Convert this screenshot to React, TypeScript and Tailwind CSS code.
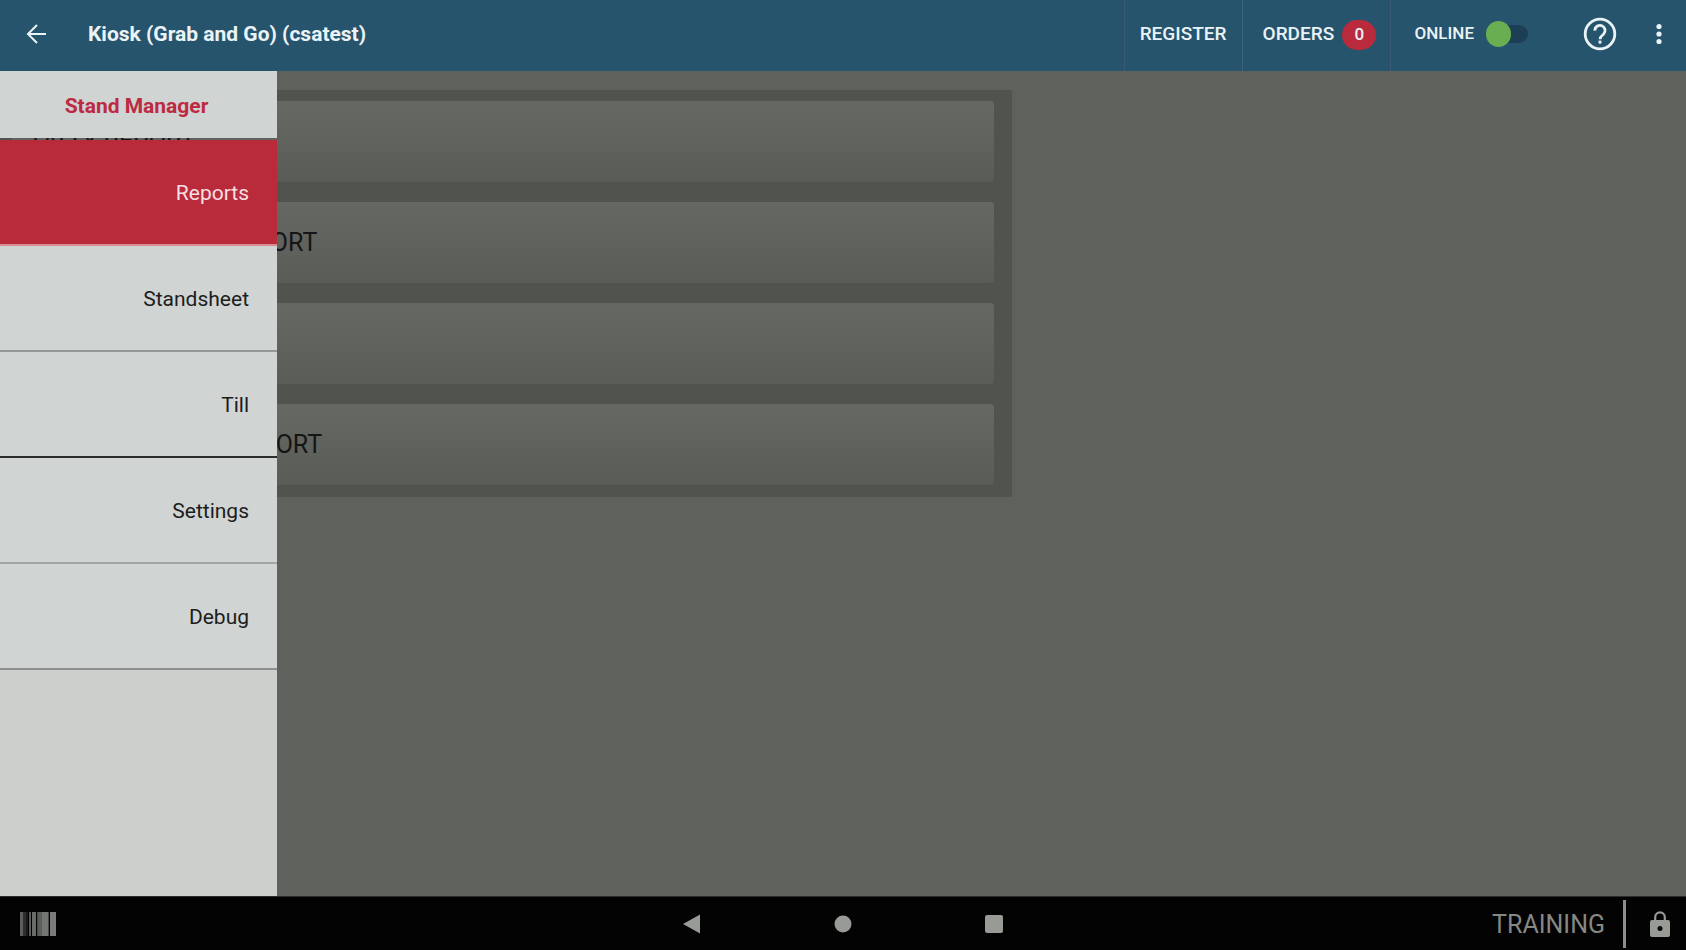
import { useState } from 'react';

const MENU_ITEMS = [
  { label: 'Reports', border: 'border-[#d98a93]' },
  { label: 'Standsheet', border: 'border-[#939897]' },
  { label: 'Till', border: 'border-[#2b2c2c]' },
  { label: 'Settings', border: 'border-[#a2a6a5]' },
  { label: 'Debug', border: 'border-[#8b8f8e]' },
];

const REPORTS = ['TALLY REPORT', 'PRODUCT SALES REPORT', 'SALES REPORT', 'EMPLOYEE CASH REPORT'];

// x, width and shade of each bar in the barcode icon
const BARS: [number, number, string][] = [
  [0, 3, '#5c5e5c'],
  [3, 3, '#2e2f2e'],
  [6, 2, '#1a1a1a'],
  [9, 2, '#5a5c5a'],
  [12, 4, '#6a6c6a'],
  [17, 1, '#4a4b4a'],
  [18, 4, '#5c5e5c'],
  [22, 6, '#747674'],
  [28, 1, '#4a4b4a'],
  [30, 6, '#7a7c7a'],
];

function TopBar() {
  const [online, setOnline] = useState(false);

  return (
    <header className="flex h-[71px] shrink-0 items-stretch bg-[#27546d] text-[#eaf3f6]">
      <div className="flex flex-1 items-center pb-1">
        <button type="button" aria-label="Back" className="ml-6 flex h-6 w-6 items-center justify-center">
          <svg width="24" height="24" viewBox="0 0 24 24" fill="none" stroke="currentColor" strokeWidth="2">
            <path d="M22 12H5M13 3l-9 9 9 9" />
          </svg>
        </button>
        <h1 className="ml-10 text-[21px] font-bold leading-6">Kiosk (Grab and Go) (csatest)</h1>
      </div>

      <nav className="flex text-[19px] font-medium">
        <button type="button" className="w-[118px] border-l border-[#3c5a72] pb-0.5 text-center">
          REGISTER
        </button>
        <button
          type="button"
          className="flex w-[148px] items-center gap-2 border-l border-[#3c6480] pb-0.5 pl-5"
        >
          ORDERS
          <span className="flex h-[30px] w-[34px] items-center justify-center rounded-full bg-[#b92b3c] text-[17px] leading-none">
            0
          </span>
        </button>
      </nav>

      <div className="flex items-center border-l border-[#3c5a72] pb-1 pl-6">
        <label className="flex cursor-pointer items-center gap-3 text-[17px] font-medium">
          ONLINE
          <span className="relative block h-[26px] w-[42px]">
            <input
              type="checkbox"
              className="peer absolute inset-0 opacity-0"
              checked={online}
              onChange={(e) => setOnline(e.target.checked)}
            />
            <span className="absolute left-1 right-0 top-1 h-[18px] rounded-full bg-[#1d3f55]" />
            <span className="absolute left-0 top-0 h-[26px] w-[25px] rounded-full bg-[#69ae50] peer-checked:left-4" />
          </span>
        </label>
        <button type="button" aria-label="Help" className="ml-[55px]">
          <svg width="34" height="34" viewBox="0 0 34 34" fill="none" stroke="currentColor">
            <circle cx="17" cy="17" r="14.8" strokeWidth="2.8" />
            <path d="M11.9 13.6a5.1 5.1 0 1 1 8.6 3.6c-1.9 1.7-3.4 2.7-3.4 5" strokeWidth="2.8" />
            <path d="M17 23.6v3" strokeWidth="2.8" />
          </svg>
        </button>
        <button type="button" aria-label="More options" className="ml-[30px] mr-[15px]">
          <svg width="24" height="24" viewBox="0 0 24 24" fill="currentColor">
            <circle cx="12" cy="4.5" r="2.6" />
            <circle cx="12" cy="12" r="2.6" />
            <circle cx="12" cy="19.5" r="2.6" />
          </svg>
        </button>
      </div>
    </header>
  );
}

function ReportList() {
  return (
    <div className="flex w-[60%] flex-col gap-5 bg-[#51534f] pb-3 pl-3 pr-[18px] pt-[11px]">
      {REPORTS.map((report) => (
        <button
          key={report}
          type="button"
          className="h-[81px] rounded bg-linear-to-b from-[#666863] to-[#5a5c58] pl-4 text-left text-[25px] text-[#151515]"
        >
          {report}
        </button>
      ))}
    </div>
  );
}

function Drawer() {
  const [selected, setSelected] = useState('Reports');

  return (
    <aside className="absolute inset-y-0 left-0 flex w-[277px] flex-col">
      <h2 className="h-[67px] bg-[#d0d4d3] pr-1 pt-[21px] text-center text-[21px] font-bold leading-7 text-[#bd2a42]">
        Stand Manager
      </h2>
      {/* see-through strip between the title and the list */}
      <div className="h-0.5" />
      <ul>
        {MENU_ITEMS.map(({ label, border }) => (
          <li key={label}>
            <button
              type="button"
              onClick={() => setSelected(label)}
              className={`flex h-[106px] w-full items-center justify-end border-b-2 pr-7 pt-[3px] text-[21px] ${border} ${
                label === selected ? 'bg-[#b92b3b] text-[#f6dfe2]' : 'bg-[#d0d4d3] text-[#1c1d1d]'
              }`}
            >
              {label}
            </button>
          </li>
        ))}
      </ul>
      <div className="flex-1 bg-[#cdcfcc]" />
    </aside>
  );
}

function SystemBar() {
  return (
    <footer className="flex h-[54px] shrink-0 items-center border-t border-[#2c2d2b] bg-[#030303] text-[#989a96]">
      <div className="flex-1">
        <svg className="ml-5" width="36" height="24" viewBox="0 0 36 24" aria-label="Barcode scanner">
          {BARS.map(([x, width, fill]) => (
            <rect key={x} x={x} y="0" width={width} height="24" fill={fill} />
          ))}
        </svg>
      </div>

      <div className="flex gap-[127px]">
        <button type="button" aria-label="Back">
          <svg width="24" height="24" viewBox="0 0 24 24" fill="currentColor">
            <path d="M20 2.5v19L3 12z" />
          </svg>
        </button>
        <button type="button" aria-label="Home">
          <svg width="24" height="24" viewBox="0 0 24 24" fill="currentColor">
            <circle cx="12" cy="12" r="8.5" />
          </svg>
        </button>
        <button type="button" aria-label="Recent apps">
          <svg width="24" height="24" viewBox="0 0 24 24" fill="currentColor">
            <rect x="3" y="3" width="18" height="18" rx="2" />
          </svg>
        </button>
      </div>

      <div className="flex flex-1 items-center justify-end">
        <span className="pt-0.5 text-[25px] text-[#868884]">TRAINING</span>
        <span className="ml-[18px] h-12 w-[3px] bg-[#8c8e8a]" />
        <svg className="ml-6 mr-4" width="20" height="26" viewBox="0 0 20 26" fill="none" aria-label="Locked">
          <path d="M5.2 10V6.2a4.8 4.8 0 0 1 9.6 0V10" stroke="currentColor" strokeWidth="2.2" />
          <rect x="0" y="9" width="20" height="17" rx="2" fill="currentColor" />
          <circle cx="10" cy="17.5" r="2.5" fill="#0a0a0a" />
        </svg>
      </div>
    </footer>
  );
}

export default function App() {
  return (
    <div className="flex h-screen flex-col bg-[#5f615c] font-[Roboto,sans-serif]">
      <TopBar />
      <main className="relative flex-1 pt-[19px]">
        <ReportList />
        <Drawer />
      </main>
      <SystemBar />
    </div>
  );
}
